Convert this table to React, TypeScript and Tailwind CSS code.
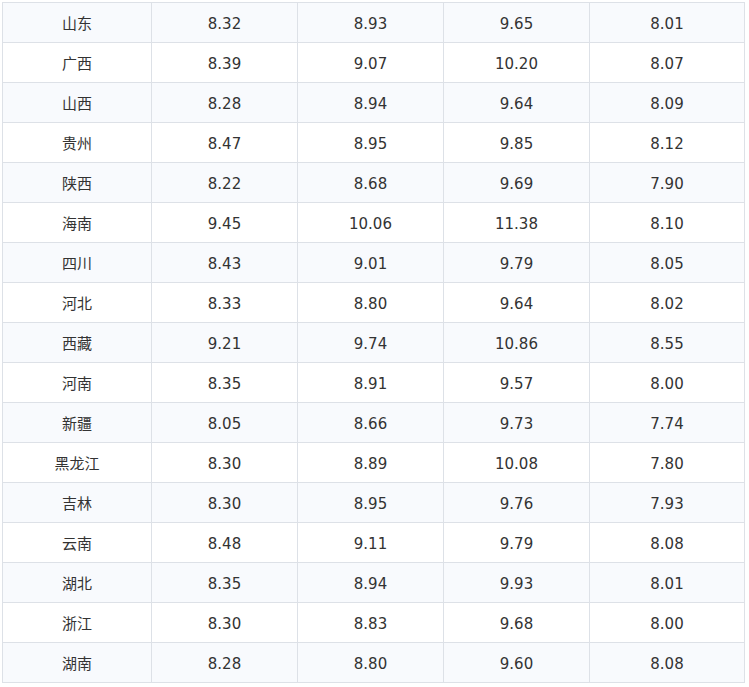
const rows: [string, string, string, string, string][] = [
  ["山东", "8.32", "8.93", "9.65", "8.01"],
  ["广西", "8.39", "9.07", "10.20", "8.07"],
  ["山西", "8.28", "8.94", "9.64", "8.09"],
  ["贵州", "8.47", "8.95", "9.85", "8.12"],
  ["陕西", "8.22", "8.68", "9.69", "7.90"],
  ["海南", "9.45", "10.06", "11.38", "8.10"],
  ["四川", "8.43", "9.01", "9.79", "8.05"],
  ["河北", "8.33", "8.80", "9.64", "8.02"],
  ["西藏", "9.21", "9.74", "10.86", "8.55"],
  ["河南", "8.35", "8.91", "9.57", "8.00"],
  ["新疆", "8.05", "8.66", "9.73", "7.74"],
  ["黑龙江", "8.30", "8.89", "10.08", "7.80"],
  ["吉林", "8.30", "8.95", "9.76", "7.93"],
  ["云南", "8.48", "9.11", "9.79", "8.08"],
  ["湖北", "8.35", "8.94", "9.93", "8.01"],
  ["浙江", "8.30", "8.83", "9.68", "8.00"],
  ["湖南", "8.28", "8.80", "9.60", "8.08"],
]

export default function App() {
  return (
    <div className="min-h-[687px] bg-white pl-[2px] pt-[2px]">
      <div
        className="grid w-[743px] grid-cols-[149px_146px_146px_146px_155px] border-l border-t border-[#dde1e7] text-[15px] text-[#333]"
        style={{ fontFamily: '"DejaVu Sans", "Noto Sans CJK SC", sans-serif' }}
      >
        {rows.map((r, i) =>
          r.map((cell, j) => (
            <div
              key={`${i}-${j}`}
              className={`flex h-[40px] items-center justify-center border-b border-r border-[#dde1e7] pt-[4px] ${
                i % 2 === 0 ? "bg-[#f8fafd]" : "bg-white"
              }`}
            >
              {cell}
            </div>
          ))
        )}
      </div>
    </div>
  )
}
